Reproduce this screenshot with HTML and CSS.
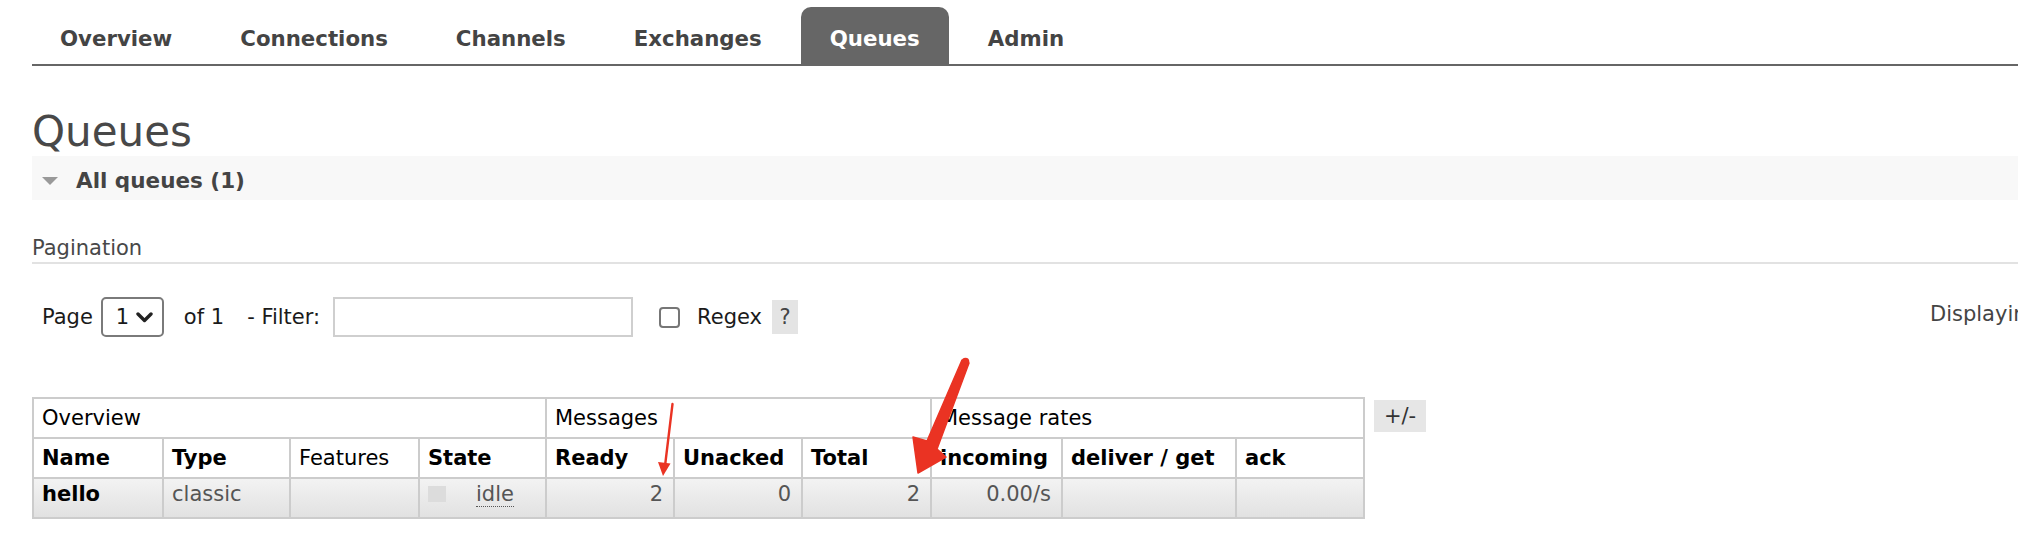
FILE: index.html
```html
<!DOCTYPE html>
<html lang="en">
<head>
<meta charset="utf-8">
<title>Queues</title>
<link rel="stylesheet" href="styles.css">
</head>
<body>
<nav class="nav">
  <a class="tab">Overview</a>
  <a class="tab">Connections</a>
  <a class="tab">Channels</a>
  <a class="tab">Exchanges</a>
  <a class="tab active">Queues</a>
  <a class="tab">Admin</a>
</nav>

<main class="main">
  <h1 class="title">Queues</h1>
  <div class="section-bar">
    <span class="tri"></span>
    <span class="section-label">All queues (1)</span>
  </div>

  <div class="pag-title">Pagination</div>

  <div class="controls">
    <div class="controls-left">
      <span class="lbl">Page</span>
      <div class="select">
        <span>1</span>
        <svg class="chev" width="17" height="11" viewBox="0 0 17 11"><polyline points="2,2 8.5,8.5 15,2" fill="none" stroke="#222" stroke-width="3.4" stroke-linecap="round" stroke-linejoin="round"/></svg>
      </div>
      <span class="lbl of">of 1</span>
      <span class="lbl filter">- Filter:</span>
      <input class="filter-input" type="text">
      <span class="checkbox"></span>
      <span class="lbl regex">Regex</span>
      <span class="help">?</span>
    </div>
    <div class="displaying">Displaying 1 item , page size up to:</div>
  </div>

  <div class="table-row">
    <table class="list">
      <colgroup>
        <col class="w130"><col class="w127"><col class="w129"><col class="w127"><col class="w128">
        <col class="w128"><col class="w129"><col class="w131"><col class="w174"><col class="w128">
      </colgroup>
      <thead>
        <tr class="group">
          <th colspan="4">Overview</th>
          <th colspan="3">Messages</th>
          <th colspan="3">Message rates</th>
        </tr>
        <tr class="heads">
          <th>Name</th>
          <th>Type</th>
          <th class="normal">Features</th>
          <th>State</th>
          <th>Ready</th>
          <th>Unacked</th>
          <th>Total</th>
          <th>incoming</th>
          <th>deliver / get</th>
          <th>ack</th>
        </tr>
      </thead>
      <tbody>
        <tr class="data">
          <td class="name">hello</td>
          <td>classic</td>
          <td></td>
          <td><span class="state-sq"></span><abbr class="idle">idle</abbr></td>
          <td class="num">2</td>
          <td class="num">0</td>
          <td class="num">2</td>
          <td class="num">0.00/s</td>
          <td></td>
          <td></td>
        </tr>
      </tbody>
    </table>
    <span class="plusminus">+/-</span>
  </div>
</main>

<svg class="annot" width="2018" height="536" viewBox="0 0 2018 536">
  <line x1="672.5" y1="404" x2="665" y2="466" stroke="#ea3323" stroke-width="2.4" stroke-linecap="round"/>
  <polygon points="658,462 670.5,463.5 663,476" fill="#ea3323"/>
  <polygon points="962,360 927,441 913,437 918,473 946,457 937,449 969,363" fill="#ea3323" stroke="#ea3323" stroke-width="1.5" stroke-linejoin="round"/>
  <circle cx="965.5" cy="361.5" r="3.8" fill="#ea3323"/>
</svg>
</body>
</html>
```

FILE: styles.css
```css
html, body {
  margin: 0;
  padding: 0;
  overflow: hidden;
}
body {
  position: relative;
  width: 2018px;
  height: 536px;
  background: #fff;
  font-family: "DejaVu Sans", Verdana, sans-serif;
  font-size: 21px;
  color: #444;
}

.nav {
  display: flex;
  gap: 10px;
  margin: 7px 0 0 32px;
  border-bottom: 2px solid #666;
}
.tab {
  display: block;
  padding: 19px 29px 12px;
  line-height: 26px;
  font-size: 21.3px;
  font-weight: bold;
  color: #444;
  border-radius: 10px 10px 0 0;
}
.tab:first-child { margin-left: -1px; }
.tab.active {
  background: #666;
  color: #fff;
}

.main {
  padding-left: 32px;
}
.title {
  margin: 42px 0 0;
  font-size: 42px;
  line-height: 48px;
  font-weight: normal;
  color: #484848;
}
.section-bar {
  display: flex;
  align-items: center;
  height: 26px;
  padding: 12px 0 6px 10px;
  background: #f8f8f8;
}
.tri {
  width: 0;
  height: 0;
  border-left: 8.5px solid transparent;
  border-right: 8.5px solid transparent;
  border-top: 8px solid #999;
  margin-right: 18px;
}
.section-label {
  font-size: 21.5px;
  line-height: 26px;
  font-weight: bold;
  color: #444;
}

.pag-title {
  margin-top: 36px;
  line-height: 25px;
  padding-bottom: 1px;
  border-bottom: 2px solid #e2e2e2;
  color: #484848;
}

.controls {
  display: grid;
  grid-template-columns: 1898px max-content;
  align-items: center;
  margin-top: 33px;
  height: 40px;
}
.controls-left {
  display: flex;
  align-items: center;
  padding-left: 10px;
}
.lbl {
  line-height: 25px;
  color: #1a1a1a;
}
.select {
  display: flex;
  align-items: center;
  box-sizing: border-box;
  width: 63px;
  height: 40px;
  margin-left: 8px;
  padding-left: 13px;
  border: 2px solid #7a7a7a;
  border-radius: 5px;
  color: #1a1a1a;
  line-height: 25px;
}
.chev { margin-left: 7px; }
.of { margin-left: 20px; }
.filter { margin-left: 23px; }
.filter-input {
  box-sizing: border-box;
  width: 300px;
  height: 40px;
  margin: 0 0 0 13px;
  border: 2px solid #cfcfcf;
  border-radius: 0;
  font: inherit;
  outline: none;
}
.checkbox {
  box-sizing: border-box;
  width: 21px;
  height: 21px;
  margin-left: 26px;
  border: 2px solid #767676;
  border-radius: 4px;
  background: #fff;
}
.regex { margin-left: 17px; }
.help {
  display: flex;
  align-items: center;
  justify-content: center;
  width: 26px;
  height: 34px;
  margin-left: 10px;
  background: #e4e4e4;
  color: #444;
  line-height: 25px;
}
.displaying {
  white-space: nowrap;
  line-height: 25px;
  color: #444;
  margin-bottom: 6px;
}

.table-row {
  display: flex;
  align-items: flex-start;
  gap: 9px;
  margin-top: 60px;
}
.list {
  border-collapse: collapse;
  table-layout: fixed;
  width: 1331px;
  border: 2px solid #ccc;
}
.w130 { width: 130px; }
.w127 { width: 127px; }
.w128 { width: 128px; }
.w129 { width: 129px; }
.w131 { width: 131px; }
.w174 { width: 174px; }
.list th, .list td {
  border: 2px solid #ccc;
  text-align: left;
  line-height: 25px;
  white-space: nowrap;
  overflow: hidden;
}
.list th {
  padding: 7px 8px 6px;
  background: #fff;
  color: #000;
}
.list tr.group th { font-weight: normal; }
.list tr.heads th { font-weight: bold; }
.list tr.heads th.normal { font-weight: normal; }
.list td {
  padding: 3px 10px 10px 8px;
  color: #555;
}
.list tr.data {
  background: linear-gradient(#f3f3f3, #e1e1e1);
}
.list td.name {
  font-weight: bold;
  color: #000;
}
.list td.num { text-align: right; }
.state-sq {
  display: inline-block;
  width: 18px;
  height: 16px;
  margin: 0 30px 0 0;
  vertical-align: -1px;
  background: #dcdcdc;
}
.idle {
  text-decoration: none;
  border-bottom: 1px dotted #555;
  color: #555;
}
.plusminus {
  display: flex;
  align-items: center;
  justify-content: center;
  width: 52px;
  height: 32px;
  margin-top: 3px;
  background: #e6e6e6;
  color: #333;
}

.annot {
  position: absolute;
  left: 0;
  top: 0;
  pointer-events: none;
}
```
